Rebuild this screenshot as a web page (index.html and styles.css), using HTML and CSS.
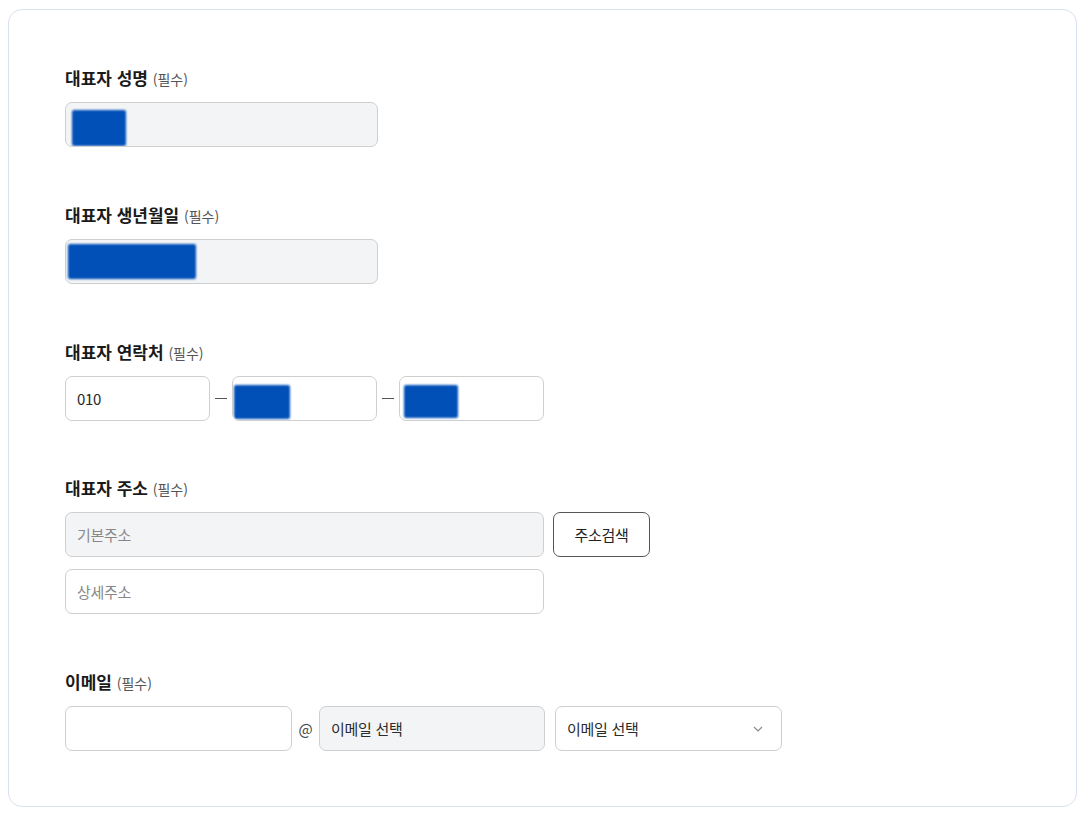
FILE: index.html
```html
<!DOCTYPE html>
<html lang="ko">
<head>
<meta charset="utf-8">
<title>대표자 정보</title>
<link rel="stylesheet" href="styles.css">
</head>
<body>
<div class="card">
  <section class="field">
    <h3 class="label">대표자 성명 <span class="req">(필수)</span></h3>
    <div class="input readonly w-313"><span class="blob blob-name"></span></div>
  </section>

  <section class="field">
    <h3 class="label">대표자 생년월일 <span class="req">(필수)</span></h3>
    <div class="input readonly w-313"><span class="blob blob-birth"></span></div>
  </section>

  <section class="field">
    <h3 class="label">대표자 연락처 <span class="req">(필수)</span></h3>
    <div class="row phone-row">
      <div class="input w-145"><span class="value">010</span></div>
      <span class="dash"></span>
      <div class="input w-145"><span class="blob blob-mid"></span></div>
      <span class="dash"></span>
      <div class="input w-145"><span class="blob blob-last"></span></div>
    </div>
  </section>

  <section class="field">
    <h3 class="label">대표자 주소 <span class="req">(필수)</span></h3>
    <div class="row addr-row">
      <div class="input readonly w-479"><span class="ph">기본주소</span></div>
      <button class="btn">주소검색</button>
    </div>
    <div class="input w-479 addr-detail"><span class="ph">상세주소</span></div>
  </section>

  <section class="field">
    <h3 class="label">이메일 <span class="req">(필수)</span></h3>
    <div class="row email-row">
      <div class="input w-227"></div>
      <span class="at">@</span>
      <div class="input readonly w-226"><span class="value">이메일 선택</span></div>
      <div class="input select w-227">
        <span class="value">이메일 선택</span>
        <svg class="chev" width="10" height="6" viewBox="0 0 10 6"><path d="M1 1 L5 5 L9 1" fill="none" stroke="#8a8a8a" stroke-width="1.2"/></svg>
      </div>
    </div>
  </section>
</div>
</body>
</html>
```

FILE: styles.css
```css
* { box-sizing: border-box; }
html, body { margin: 0; padding: 0; background: #fff; }
body {
  padding: 9px 7px 0 8px;
  font-family: "Noto Sans CJK KR", "Noto Sans", sans-serif;
  color: #222;
}
.card {
  height: 798px;
  border: 1px solid #d9e0ee;
  border-radius: 14px;
  padding: 56px 56px;
  display: flex;
  flex-direction: column;
  gap: 55.8px;
}
.field { display: flex; flex-direction: column; }
.label {
  margin: 0 0 12px;
  height: 24px;
  line-height: 24px;
  font-size: 17px;
  font-weight: 700;
  color: #1a1a1a;
  letter-spacing: 0;
}
.req {
  font-size: 14px;
  font-weight: 400;
  color: #555;
}
.input {
  position: relative;
  height: 45px;
  border: 1px solid #cfcfcf;
  border-radius: 7px;
  background: #fff;
  display: flex;
  align-items: center;
  padding: 0 11px;
  font-size: 15px;
  overflow: hidden;
}
.input.readonly { background: #f3f4f6; }
.w-313 { width: 313px; }
.w-145 { width: 145px; }
.w-479 { width: 479px; }
.w-227 { width: 227px; }
.w-226 { width: 226px; }
.value { color: #2a2a2a; letter-spacing: -0.3px; }
.ph { color: #888; letter-spacing: -0.3px; }
.row { display: flex; align-items: center; }
.phone-row { gap: 5px; }
.dash { width: 12px; height: 1px; background: #555; }
.addr-row { gap: 9px; }
.addr-detail { margin-top: 12px; }
.btn {
  width: 97px;
  height: 45px;
  border: 1px solid #555;
  border-radius: 7px;
  background: #fff;
  font-family: inherit;
  font-size: 15px;
  color: #222;
  letter-spacing: -0.3px;
  padding: 0;
}
.email-row { gap: 0; }
.at {
  width: 27px;
  text-align: center;
  font-size: 15px;
  color: #444;
}
.select { margin-left: 10px; justify-content: space-between; padding-right: 18px; }
.chev { display: block; }
.blob {
  position: absolute;
  background: #0050b8;
  filter: blur(1px);
  border-radius: 2px;
}
.blob-name { left: 6px; top: 7px; width: 54px; height: 36px; }
.blob-birth { left: 2px; top: 4px; width: 128px; height: 35px; }
.blob-mid { left: 1px; top: 8px; width: 56px; height: 34px; }
.blob-last { left: 4px; top: 8px; width: 54px; height: 33px; }
```
